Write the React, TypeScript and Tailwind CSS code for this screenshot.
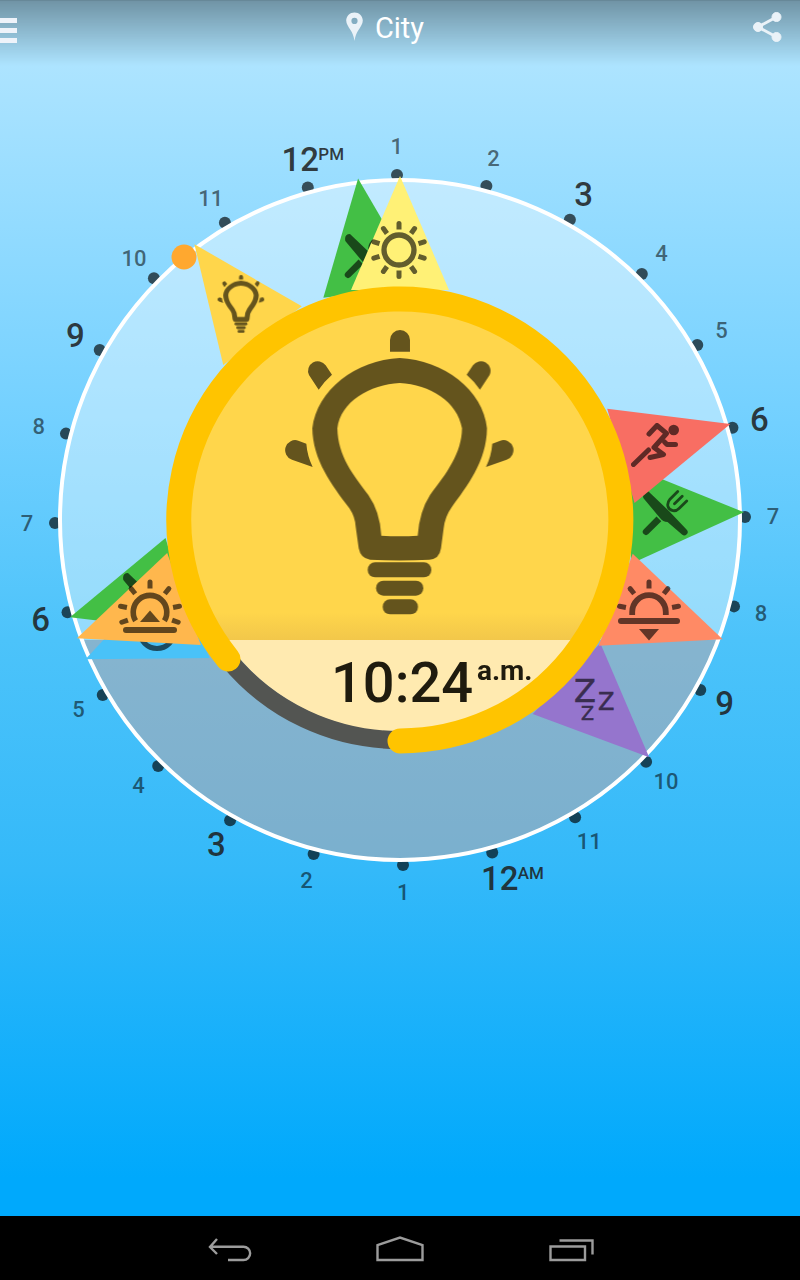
import React from 'react'

type IconName = 'bulb' | 'sun' | 'sunrise' | 'sunset' | 'food' | 'run' | 'sleep' | 'circle'

interface Activity {
  name: string
  angle: number
  color: string
  icon: IconName
  x: number
  y: number
}

const CX = 400
const CY = 520
const HORIZON = 640

// Painted in order, later ones cover earlier ones
const activities: Activity[] = [
  { name: 'Wake up', angle: 246.1, color: '#49c2f8', icon: 'circle', x: 157, y: 631 },
  { name: 'Breakfast', angle: 253.6, color: '#43bf45', icon: 'food', x: 145, y: 595 },
  { name: 'Sunrise', angle: 249.9, color: '#ffb74d', icon: 'sunrise', x: 150, y: 612 },
  { name: 'Focus', angle: -36.7, color: '#ffd64b', icon: 'bulb', x: 241, y: 304 },
  { name: 'Lunch', angle: -7, color: '#43bf45', icon: 'food', x: 367, y: 256 },
  { name: 'Noon', angle: 0, color: '#fff176', icon: 'sun', x: 399, y: 250 },
  { name: 'Dinner', angle: 88.7, color: '#43bf45', icon: 'food', x: 665, y: 513 },
  { name: 'Exercise', angle: 73.8, color: '#f86e63', icon: 'run', x: 657, y: 446 },
  { name: 'Sleep', angle: 133.6, color: '#9575cd', icon: 'sleep', x: 595, y: 700 },
  { name: 'Sunset', angle: 110.3, color: '#ff8a65', icon: 'sunset', x: 649, y: 612 }
]

const hours = Array.from({ length: 24 }, (_, hour) => hour)

const polar = (angle: number, radius: number) => {
  const rad = (angle * Math.PI) / 180
  return { x: CX + radius * Math.sin(rad), y: CY - radius * Math.cos(rad) }
}

function Bulb() {
  const side = (
    <>
      <path d="M146 209L117 165A29 29 0 0 1 167 136L186 164Q163 184 146 209Z" />
      <path d="M128 441L66 419A29 29 0 0 1 85 362L109 371Q112 408 128 441Z" />
    </>
  )
  return (
    <>
      <path d="M360 95V60a30 30 0 0 1 60 0V95Z" />
      {side}
      <g transform="translate(776 0) scale(-1 1)">{side}</g>
      <path
        fillRule="evenodd"
        d="M389 114C520 120 640 210 651 325C650 425 590 500 545 562Q525 590 521 625L513 685Q508 718 478 719Q389 724 300 719Q272 716 266 685L257 620Q255 590 238 565C185 495 128 420 127 325C140 210 258 120 389 114ZM389 189C300 193 212 245 202 325C204 410 250 465 295 525Q330 575 334 647Q389 650 443 647Q448 575 480 525C530 460 575 400 576 325C562 245 480 193 389 189Z"
      />
      <rect x="293" y="727" width="191" height="45" rx="22" />
      <rect x="318" y="782" width="142" height="45" rx="22" />
      <rect x="338" y="838" width="106" height="45" rx="22" />
    </>
  )
}

function Rays({ angles, inner, outer }: { angles: number[]; inner: number; outer: number }) {
  return (
    <>
      {angles.map((a) => (
        <path
          key={a}
          transform={`rotate(${a})`}
          d={`M-2.5 ${-inner}V${-outer + 2.5}a2.5 2.5 0 0 1 5 0V${-inner}Z`}
        />
      ))}
    </>
  )
}

function Icon({ name }: { name: IconName }) {
  switch (name) {
    case 'bulb':
      return (
        <g transform="scale(0.068) translate(-389 -457)">
          <Bulb />
        </g>
      )
    case 'sun':
      return (
        <>
          <circle r="15" fill="none" stroke="black" strokeWidth="5.3" />
          <Rays angles={[0, 36, 72, 108, 144, 180, 216, 252, 288, 324]} inner={20.5} outer={29} />
        </>
      )
    case 'sunrise':
      return (
        <>
          <path d="M-14.4 8.8A16.8 16.8 0 1 1 14.4 8.8" fill="none" stroke="black" strokeWidth="5.6" />
          <Rays angles={[-110, -79, -39, 0, 39, 79, 110]} inner={23.5} outer={32.5} />
          <path d="M0 -1.5L10 10H-10Z" />
          <rect x="-27" y="15" width="54" height="6" rx="3" />
        </>
      )
    case 'sunset':
      return (
        <>
          <path d="M-16.8 3V0A16.8 16.8 0 0 1 16.8 0V3" fill="none" stroke="black" strokeWidth="5.8" />
          <Rays angles={[-79, -39, 0, 39, 79]} inner={23.5} outer={32.5} />
          <path d="M0 28.5L10 17H-10Z" />
          <rect x="-31" y="6" width="62" height="6" rx="3" />
        </>
      )
    case 'food':
      return (
        <>
          <path d="M-21.7 -15Q-23 -22 -17 -22L4 -2L21.5 16.5A3.3 3.3 0 0 1 17 21.5L2.5 9Q-2 9 -5 5Z" />
          <path d="M-8.5 3.5L-21.3 16.5A3.2 3.2 0 0 0 -16.7 21L-3.7 8.2Z" />
          <path
            d="M12.7 -21.5L5 -13.8C1 -9 2.5 -3.5 8 -2.3C10 -2 12 -2.5 14 -4.5L21.7 -12M17.2 -16.8L9.5 -9.2"
            fill="none"
            stroke="black"
            strokeWidth="2.8"
            strokeLinecap="round"
          />
        </>
      )
    case 'run':
      return (
        <>
          <circle cx="16.7" cy="-16" r="5.3" />
          <g fill="none" stroke="black" strokeWidth="5" strokeLinecap="round" strokeLinejoin="round">
            <path d="M-8 -12L0 -20.5L9.5 -12.5L-3 1.5L6.5 8.5L-7 11.5" />
            <path d="M-8.5 4L-23.5 18.5" />
            <path d="M7.5 -4L10 -1.5H18.5" />
          </g>
        </>
      )
    case 'sleep':
      return (
        <text className="font-['DejaVu_Sans',sans-serif]" stroke="black" strokeWidth="0.6">
          <tspan x="-21" y="2" fontSize="32">Z</tspan>
          <tspan x="3" y="10" fontSize="24">Z</tspan>
          <tspan x="-14" y="20" fontSize="19">Z</tspan>
        </text>
      )
    case 'circle':
      return <circle r="17.5" fill="none" stroke="black" strokeWidth="5" />
  }
}

function HourMark({ hour }: { hour: number }) {
  const dot = polar((hour - 13) * 15 - 0.5, 345)
  return <circle cx={dot.x} cy={dot.y} r="6" fill="black" fillOpacity="0.65" />
}

function HourLabel({ hour }: { hour: number }) {
  const pos = polar((hour - 13) * 15 - 0.5, 373)
  const major = hour % 3 === 0
  const size = major ? 33 : 22
  const y = pos.y + size * 0.33
  return (
    <g fill={major ? '#1d1d1d' : 'black'} fillOpacity={major ? 0.87 : 0.55} className="font-medium">
      <text x={pos.x} y={y} fontSize={size} textAnchor="middle">
        {hour % 12 || 12}
      </text>
      {hour % 12 === 0 && (
        <text x={pos.x + 18} y={y - 11} fontSize="17">
          {hour === 0 ? 'AM' : 'PM'}
        </text>
      )}
    </g>
  )
}

function Dial() {
  return (
    <svg viewBox="0 120 800 800" className="w-full" role="img" aria-label="Day clock">
      <defs>
        <linearGradient id="dusk" x1="0" y1="0" x2="0" y2="1">
          <stop offset="0" stopColor="#ffd64b" />
          <stop offset="1" stopColor="#f2c74a" />
        </linearGradient>
        <clipPath id="core">
          <circle cx={CX} cy={CY} r="212" />
        </clipPath>
        <clipPath id="day">
          <rect x="0" y="120" width="800" height={HORIZON - 120} />
        </clipPath>
        <clipPath id="night">
          <rect x="0" y={HORIZON} width="800" height="280" />
        </clipPath>
      </defs>

      {hours.map((h) => <HourMark key={h} hour={h} />)}
      {hours.map((h) => <HourLabel key={h} hour={h} />)}

      {/* Day and night halves */}
      <circle cx={CX} cy={CY} r="340" fill="white" fillOpacity="0.4" clipPath="url(#day)" />
      <circle cx={CX} cy={CY} r="340" fill="#c0a6a3" fillOpacity="0.5" clipPath="url(#night)" />
      <circle cx={CX} cy={CY} r="340" fill="none" stroke="white" strokeWidth="4" />
      <circle cx="184" cy="257" r="12.5" fill="#ffa82f" />

      {/* Activities */}
      {activities.map((a) => (
        <g key={a.name}>
          <path
            d={`M${CX} ${CY - 344}L${CX + 49} ${CY - 230}H${CX - 49}Z`}
            fill={a.color}
            transform={`rotate(${a.angle} ${CX} ${CY})`}
          />
          <g transform={`translate(${a.x} ${a.y})`} opacity="0.61">
            <Icon name={a.icon} />
          </g>
        </g>
      ))}

      {/* Current activity */}
      <g clipPath="url(#core)">
        <rect x="180" y="300" width="440" height="340" fill="#ffd64b" />
        <rect x="180" y="612" width="440" height="28" fill="url(#dusk)" />
        <rect x="180" y={HORIZON} width="440" height="100" fill="#ffeab0" />
      </g>
      <path d="M228 659A221 221 0 0 0 400 740" fill="none" stroke="#535552" strokeWidth="18" />
      <path
        d="M228 659A221 221 0 1 1 400 741"
        fill="none"
        stroke="#ffc400"
        strokeWidth="25"
        strokeLinecap="round"
      />
      <g transform="translate(270 320) scale(0.3333)" opacity="0.61">
        <Bulb />
      </g>
      <g fill="#1f1b0e">
        <text x="331" y="702" fontSize="56" className="font-medium">10:24</text>
        <text x="477" y="680" fontSize="28" className="font-bold">a.m.</text>
      </g>
    </svg>
  )
}

function Header() {
  return (
    <header className="flex h-[66px] items-start justify-between border-t border-black/40 bg-linear-to-b from-black/35 to-transparent pt-[11px]">
      <button aria-label="Menu" className="flex w-[17px] flex-col gap-[5px] pt-[6px]">
        <span className="h-[5px] w-full bg-[#eef3fa]" />
        <span className="h-[5px] w-full bg-[#eef3fa]" />
        <span className="h-[5px] w-full bg-[#eef3fa]" />
      </button>
      <h1 className="flex items-start gap-3 text-[29px] leading-8 text-white">
        <svg viewBox="0 0 17 29" className="h-[29px] w-[17px]" fill="#eaf2f8">
          <path
            fillRule="evenodd"
            d="M8.5 0.5C13 0.5 16.8 4 16.8 8.6C16.8 12 14.5 15 12.5 18C10.5 21 9.3 24 8.5 29C7.7 24 6.5 21 4.5 18C2.5 15 0.2 12 0.2 8.6C0.2 4 4 0.5 8.5 0.5ZM8.5 5.8A3.1 3.1 0 1 0 8.5 12A3.1 3.1 0 1 0 8.5 5.8Z"
          />
        </svg>
        City
      </h1>
      <button aria-label="Share" className="pr-[18px]">
        <svg viewBox="0 0 29 30" className="h-[30px] w-[29px]" fill="#eaf2f8" stroke="#eaf2f8">
          <path d="M23.5 5L5 15L23.5 25" fill="none" strokeWidth="3" />
          <circle cx="23.5" cy="5" r="4.5" />
          <circle cx="5" cy="15" r="4.5" />
          <circle cx="23.5" cy="25" r="4.5" />
        </svg>
      </button>
    </header>
  )
}

const navItems = [
  { label: 'Back', path: 'M12 7L5 15L12 22M5 14.7H38.5A6.6 6.6 0 0 1 38.5 28H23' },
  { label: 'Home', path: 'M1.5 28V13L24 5.5L46.5 13V28Z' },
  { label: 'Recent apps', path: 'M3.5 14.5H38V28H3.5ZM12.5 8.5H45.5V22.5' }
]

function NavBar() {
  return (
    <nav className="mt-auto flex h-16 justify-center bg-black">
      {navItems.map((item) => (
        <button key={item.label} aria-label={item.label} className="flex w-[171px] items-center justify-center">
          <svg viewBox="0 0 48 32" className="h-8 w-12" fill="none" stroke="#9c9c9c" strokeWidth="2.4">
            <path d={item.path} />
          </svg>
        </button>
      ))}
    </nav>
  )
}

export default function App() {
  return (
    <div className="flex min-h-screen flex-col bg-[linear-gradient(to_bottom,#ade4ff_5%,#72d0ff_33%,#4cc3fa_50%,#34b9f9_68%,#00a9fc_92%)] font-['Roboto',sans-serif]">
      <Header />
      <main className="mx-auto w-full max-w-[800px] pt-[54px] pb-10">
        <Dial />
      </main>
      <NavBar />
    </div>
  )
}
